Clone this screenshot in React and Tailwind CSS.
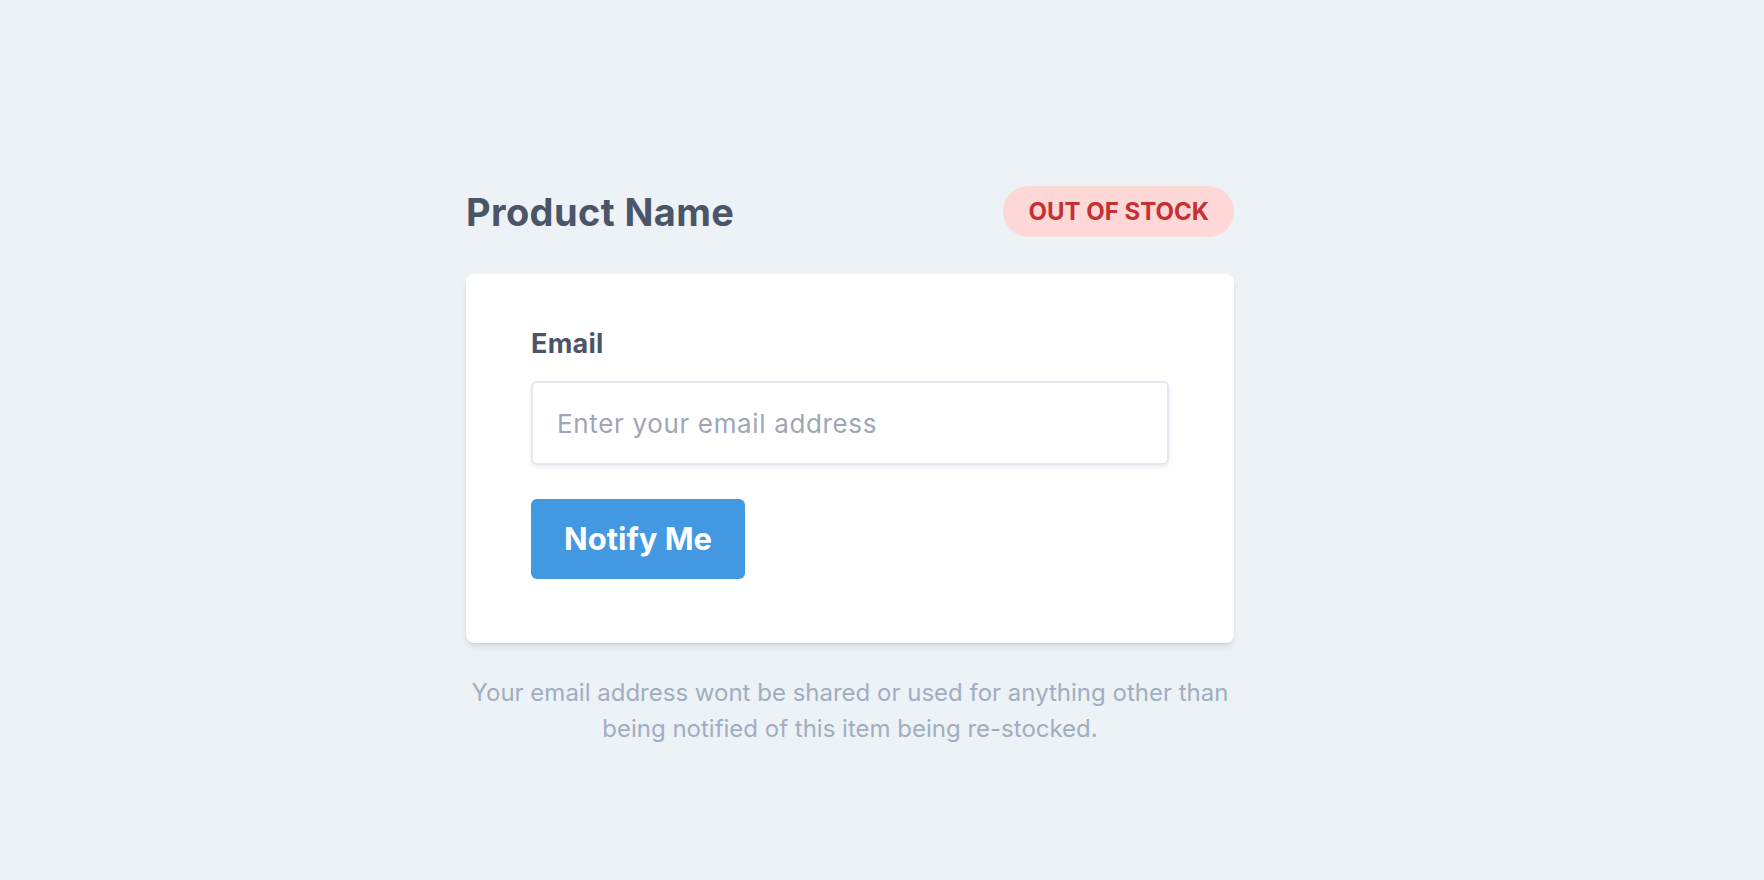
export default function App() {
  return (
    <div className="min-h-screen bg-[#edf2f7] font-['Inter',_'Noto_Sans',_sans-serif] flex justify-center pr-16 pt-[186px]">
      <div className="w-[768px] flex flex-col">
        {/* Header */}
        <div className="flex items-center justify-between">
          <h1 className="text-[38px] font-bold leading-none tracking-[0.01em] text-[#4a5568]">Product Name</h1>
          <span className="h-[51px] px-[25px] flex items-center rounded-full bg-[#fed7d7] text-[24px] font-bold text-[#c53030]">
            OUT OF STOCK
          </span>
        </div>

        {/* Card */}
        <div className="mt-[37px] bg-white rounded-lg shadow-md px-[65px] pt-[54px] pb-[64px]">
          <label className="block text-[27px] font-bold leading-[32px] tracking-[0.01em] text-[#4a5568]">Email</label>
          <input
            type="email"
            placeholder="Enter your email address"
            className="mt-[21px] block w-full h-[84px] px-6 rounded-md border-2 border-[#e2e8f0] shadow-[0_2px_4px_rgba(0,0,0,0.08)] text-[26px] tracking-[0.025em] text-[#4a5568] placeholder:text-[#a0a6b4] outline-none"
          />
          <button className="mt-[34px] h-[80px] px-[33px] rounded-md bg-[#4299e1] text-white text-[31px] font-bold">
            Notify Me
          </button>
        </div>

        {/* Footer note */}
        <p className="mt-[32px] text-center text-[24px] leading-[36px] text-[#a0aec0]">
          Your email address wont be shared or used for anything other than
          <br />
          being notified of this item being re-stocked.
        </p>
      </div>
    </div>
  );
}
